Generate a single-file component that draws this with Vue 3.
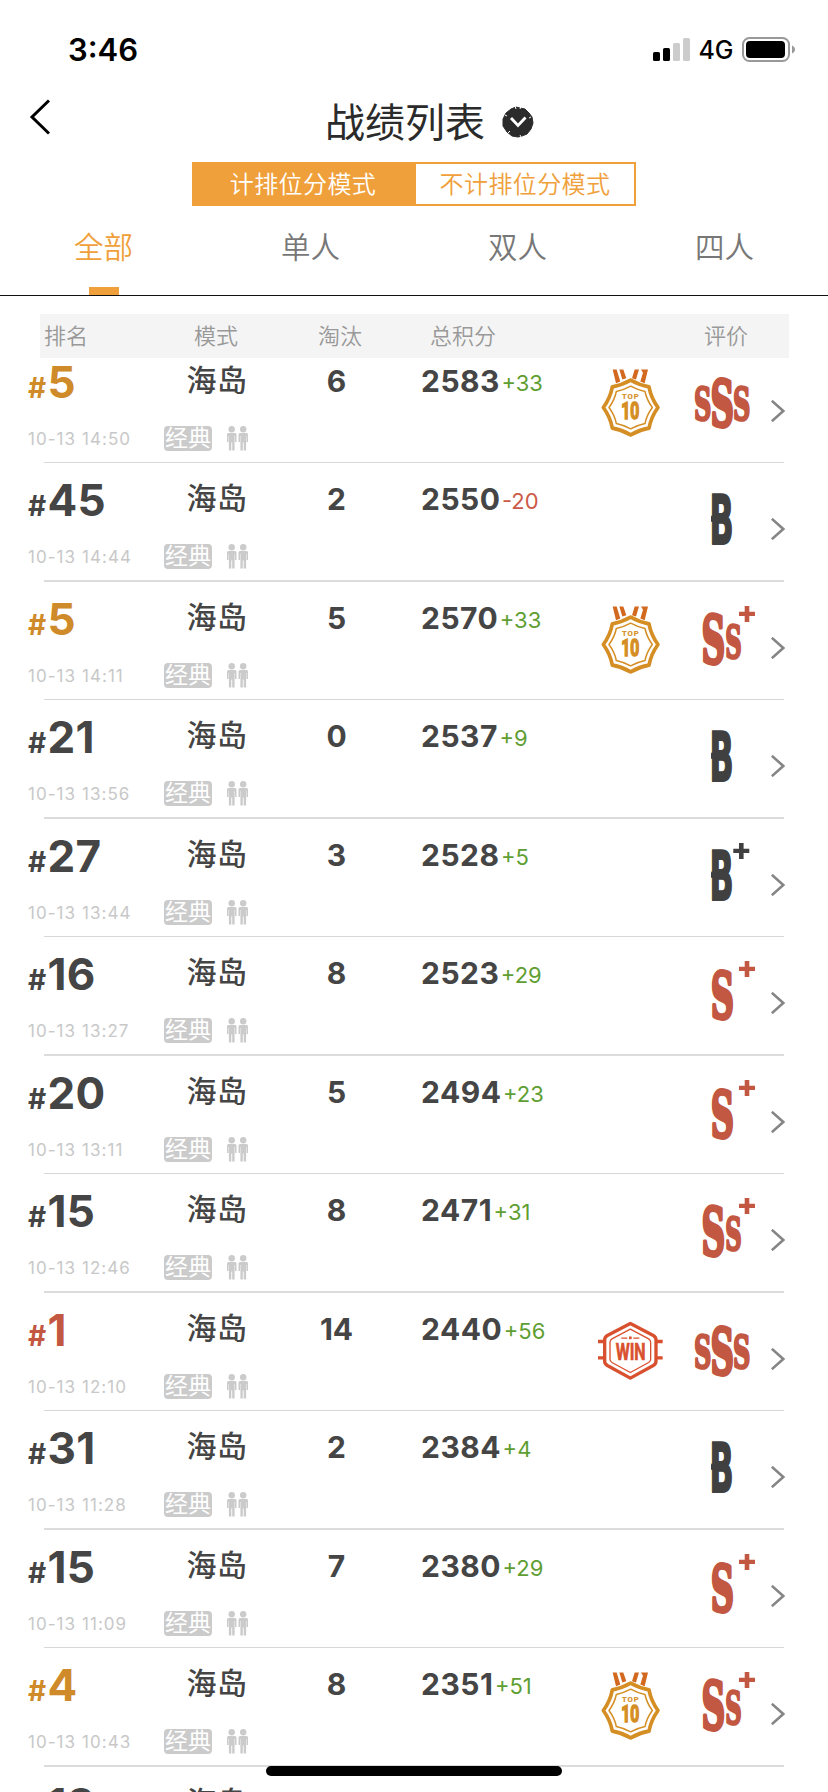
<script setup>
const rows = [
  { rank: 5, time: '10-13 14:50', kills: 6, score: 2583, delta: '+33', medal: 'top', grade: 'SSS' },
  { rank: 45, time: '10-13 14:44', kills: 2, score: 2550, delta: '-20', grade: 'B' },
  { rank: 5, time: '10-13 14:11', kills: 5, score: 2570, delta: '+33', medal: 'top', grade: 'SS+' },
  { rank: 21, time: '10-13 13:56', kills: 0, score: 2537, delta: '+9', grade: 'B' },
  { rank: 27, time: '10-13 13:44', kills: 3, score: 2528, delta: '+5', grade: 'B+' },
  { rank: 16, time: '10-13 13:27', kills: 8, score: 2523, delta: '+29', grade: 'S+' },
  { rank: 20, time: '10-13 13:11', kills: 5, score: 2494, delta: '+23', grade: 'S+' },
  { rank: 15, time: '10-13 12:46', kills: 8, score: 2471, delta: '+31', grade: 'SS+' },
  { rank: 1, time: '10-13 12:10', kills: 14, score: 2440, delta: '+56', medal: 'win', grade: 'SSS' },
  { rank: 31, time: '10-13 11:28', kills: 2, score: 2384, delta: '+4', grade: 'B' },
  { rank: 15, time: '10-13 11:09', kills: 7, score: 2380, delta: '+29', grade: 'S+' },
  { rank: 4, time: '10-13 10:43', kills: 8, score: 2351, delta: '+51', medal: 'top', grade: 'SS+' },
  { rank: 13, time: '', kills: '', score: '', delta: '', grade: '' },
]
const tabs = ['全部', '单人', '双人', '四人']

// Letter boxes [char, left, top, width, height] inside the grade cell
const letters = {
  SSS: [['S', 23.6, 40, 15.4, 37], ['S', 62.6, 40, 15.4, 37], ['S', 40.2, 31.3, 20.8, 52.4]],
  'SS+': [['S', 31.4, 31.3, 21, 53], ['S', 54.8, 41, 14.6, 37]],
  'S+': [['S', 40.5, 31.3, 20.6, 52.4]],
  B: [['B', 41, 31, 20.4, 51.5]],
  'B+': [['B', 41, 31, 20.4, 51.5]],
}
const ink = {
  S: { x: 5.5, w: 58, h: 75.7, o: 1.4, s: 3 },
  B: { x: 9.2, w: 61.5, h: 72.9, o: 0, s: 1.5 },
}
// Ink metrics and stroke half-width (s) are in the 100-unit glyph space
function place([ch, x, y, w, h]) {
  const m = ink[ch]
  const sx = w / (m.w + 2 * m.s)
  const sy = h / (m.h + 2 * m.s)
  return `translate(${x - (m.x - m.s) * sx} ${y + h - (m.o + m.s) * sy}) scale(${sx} ${sy})`
}
const plus = { 'SS+': [76, 31.5], 'S+': [76, 31.5], 'B+': [70.3, 31.5] }
const rankTone = (r) => (r === 1 ? 'win' : r <= 10 ? 'top' : '')
</script>

<template>
  <div class="page">
    <header class="status">
      <span class="clock">3:46</span>
      <span class="right">
        <svg class="bars" width="38" height="24" viewBox="0 0 38 24">
          <rect x="0" y="14" width="7" height="9" rx="1.6" />
          <rect x="10" y="10" width="7" height="13" rx="1.6" />
          <rect x="20" y="5" width="7" height="18" rx="1.6" fill="#ccc" />
          <rect x="30" y="0" width="7" height="23" rx="1.6" fill="#ccc" />
        </svg>
        <span class="net">4G</span>
        <svg width="54" height="26" viewBox="0 0 54 26">
          <rect x="1" y="1" width="46" height="23" rx="6.5" fill="none" stroke="#999" stroke-width="2" />
          <rect x="4" y="4" width="39" height="17" rx="4" />
          <path d="M50 8.500c4 1.500 4 6.500 0 8z" fill="#999" />
        </svg>
      </span>
    </header>

    <div class="titlebar">
      <svg class="back" width="22" height="36" viewBox="0 0 22 36">
        <path d="M21 1.500 4 18l17 16.500" fill="none" stroke="#000" stroke-width="3" />
      </svg>
      <h1>战绩列表</h1>
      <svg class="drop" width="32" height="32" viewBox="0 0 32 32">
        <path d="M9 3l5-2 4 1 5 1 4 4 3 4 1 6-2 6-4 5-5 2-4 1-6-1-5-4-4-6 0-7 3-6z" fill="#2b2b2b" stroke="#2b2b2b" stroke-width="1" stroke-linejoin="round" />
        <path d="M9 12l7 7.500 7.500-8" fill="none" stroke="#fff" stroke-width="2.800" />
        <path d="M13 0l1 3M19 0l-1 3M3 9l2 1M29 11l-2 1M6 27l2-2M19 31l-1-2" stroke="#fff" stroke-width="1" />
      </svg>
    </div>

    <div class="toggle">
      <span class="on">计排位分模式</span>
      <span class="off">不计排位分模式</span>
    </div>

    <nav class="tabs">
      <span v-for="(t, i) in tabs" :key="t" :class="{ active: i === 0 }">{{ t }}</span>
    </nav>

    <div class="head">
      <span>排名</span><span>模式</span><span>淘汰</span><span>总积分</span><span>评价</span>
    </div>

    <main class="viewport">
      <div class="list">
        <article v-for="(r, i) in rows" :key="i" class="row">
          <div class="rank">
            <div class="place" :class="rankTone(r.rank)"><small>#</small>{{ r.rank }}</div>
            <div class="time">{{ r.time }}</div>
          </div>
          <div class="mode">
            <div class="map">海岛</div>
            <div v-if="r.time" class="tags">
              <span class="tag">经典</span>
              <svg width="21" height="25" viewBox="0 0 21 25" fill="#cbcbcb">
                <g v-for="k in [0, 11.5]" :key="k" :transform="`translate(${k} 0)`">
                  <circle cx="4.700" cy="3.300" r="3.200" />
                  <path d="M1.500 7h6.500q1.500 0 1.500 1.500V16H8V10H7.600V24.500H5.200V16.500H4.300V24.500H1.900V10H1.500V16H0V8.500Q0 7 1.500 7z" />
                </g>
              </svg>
            </div>
          </div>
          <div class="kills">{{ r.kills }}</div>
          <div class="score">
            <b>{{ r.score }}</b><i :class="{ down: r.delta[0] === '-' }">{{ r.delta }}</i>
          </div>
          <svg class="medal" width="81" height="117" viewBox="0 0 81 117">
            <g v-if="r.medal === 'top'" transform="translate(0 15.5) scale(.3333)">
              <path fill="#d2691f" d="M68 27h12l11 36-13 5zM88 27h12l9 26-12 4zM134 27h13l-9 30-12-4zM153 27h21l-2 8-8 33-13-5 8-26z" />
              <g fill="none" stroke="#d58e24" stroke-linejoin="round">
                <path d="M122 59Q148 74 177 79Q183 112 204 141Q183 170 177 203Q148 208 122 223Q96 208 67 203Q61 170 40 141Q61 112 67 79Q96 74 122 59Z" stroke-width="11" />
                <path d="M122 77Q142 88 165 93Q170 118 187 141Q170 164 165 189Q142 194 122 205Q102 194 79 189Q74 164 57 141Q74 118 79 93Q102 88 122 77Z" stroke-width="4.500" />
              </g>
              <g fill="#d58e24" stroke="#d58e24" class="stamp">
                <text x="96" y="117" font-size="23" textLength="50" lengthAdjust="spacing" stroke-width=".5">TOP</text>
                <text x="94" y="177" font-size="73" textLength="54" lengthAdjust="spacingAndGlyphs" stroke-width="5">10</text>
              </g>
            </g>
            <g v-else-if="r.medal === 'win'" transform="translate(0 7.5) scale(.3333)">
              <g fill="none" stroke="#d9502f" stroke-linejoin="round">
                <path d="M121 69L190 105Q198 110 198 118V182Q198 190 190 195L121 233L52 195Q44 190 44 182V118Q44 110 52 105Z" stroke-width="10" />
                <path d="M121 86L176 115Q182 118 182 126V176Q182 182 176 186L121 216L66 186Q60 182 60 176V126Q60 118 66 115Z" stroke-width="4" />
                <path d="M24 123h20M24 172h20M198 123h20M198 172h20" stroke-width="10" />
                <path d="M94 113h18M130 113h18" stroke-width="4" />
                <path d="M117 112h8" stroke-width="8" />
              </g>
              <g class="stamp">
                <text x="77" y="179" font-size="71" textLength="90" lengthAdjust="spacingAndGlyphs" fill="#d9502f" stroke="#d9502f" stroke-width="2">WIN</text>
              </g>
            </g>
          </svg>
          <svg class="grade" :class="r.grade[0]" width="100" height="117" viewBox="0 0 100 117">
            <text v-for="(l, k) in letters[r.grade]" :key="k" :transform="place(l)">{{ l[0] }}</text>
            <rect v-if="r.grade[0] === 'B'" x="40" y="52.500" width="3" height="6.500" rx="1" />
            <path v-if="plus[r.grade]" :transform="`translate(${plus[r.grade][0] - 8} ${plus[r.grade][1] - 7.5})`" d="M5.700 0h4.600v5.700H16v4.400h-5.700V16H5.700v-5.900H0V5.700h5.700z" />
          </svg>
          <svg v-if="r.time" class="arrow" width="14" height="22" viewBox="0 0 14 22">
            <path d="M.8.8 12.300 11 .8 21.200" fill="none" stroke="#858585" stroke-width="2.600" />
          </svg>
        </article>
      </div>
    </main>
    <div class="home"></div>
  </div>
</template>

<style>
body { background: #fff; }
</style>

<style scoped>
.page {
  position: relative;
  width: 828px;
  height: 1792px;
  overflow: hidden;
  background: #fff;
  font-family: Inter, "Noto Sans CJK SC", sans-serif;
  color: #454545;
  display: flex;
  flex-direction: column;
}
.status {
  height: 100px;
  flex: none;
  display: flex;
  justify-content: space-between;
  padding: 0 32.5px 0 68px;
  box-sizing: border-box;
  color: #000;
}
.clock { font-size: 31px; font-weight: 600; line-height: 38px; margin-top: 31px; }
.right { display: flex; align-items: flex-start; padding-top: 37px; }
.bars { margin-top: 1px; }
.net { font-size: 25px; font-weight: 500; line-height: 30px; margin: -2px 8px 0 7px; letter-spacing: 0; }
.titlebar {
  height: 62px;
  flex: none;
  display: flex;
  align-items: flex-start;
  padding-left: 28px;
}
.back { margin-top: -1px; }
h1 {
  margin: 1px 0 0 275px;
  font-size: 40px;
  line-height: 44px;
  font-weight: 400;
  color: #2b2b2b;
  width: 160px;
  white-space: nowrap;
}
.drop { margin: 6px 0 0 17px; }
.toggle {
  flex: none;
  width: 444px;
  height: 44px;
  box-sizing: border-box;
  margin-left: 192px;
  border: 2px solid #f0a03a;
  display: flex;
  font-size: 24px;
  letter-spacing: .4px;
  line-height: 42px;
  text-align: center;
  font-weight: 350;
}
.on { width: 222px; padding-right: 4px; box-sizing: border-box; background: #f0a03a; color: #fff; }
.off { flex: 1; color: #f0a03a; }
.tabs {
  flex: none;
  height: 90px;
  box-sizing: border-box;
  border-bottom: 1px solid #111;
  display: flex;
  font-size: 29.5px;
  font-weight: 350;
  color: #777;
}
.tabs span {
  flex: 1;
  display: flex;
  flex-direction: column;
  align-items: center;
  line-height: 40px;
  padding-top: 21px;
}
.tabs .active { color: #f0a03a; }
.tabs .active::after { content: ""; width: 30px; height: 8px; background: #f0a03a; margin-top: 20px; }
.head {
  flex: none;
  height: 44px;
  margin: 18px 39px 0 40px;
  background: #f4f4f4;
  color: #999;
  font-size: 22px;
  font-weight: 350;
  line-height: 45px;
  display: grid;
  grid-template-columns: 150px 124px 112px 274px auto;
  padding-left: 4px;
}
.viewport { flex: 1; overflow: hidden; }
.list { margin-top: -13px; }
.row {
  position: relative;
  height: 118px;
  box-sizing: border-box;
  padding-left: 28px;
  width: 785px;
  display: flex;
}
.row:nth-child(even) { height: 119px; }
.row::after {
  content: "";
  position: absolute;
  left: 44px;
  right: 1px;
  bottom: 0;
  height: 1px;
  background: #d8d8d8;
}
.row:nth-child(even)::after { height: 2px; background: #dcdcdc; }
.rank { width: 136px; flex: none; }
.place {
  font-size: 44px;
  font-weight: 700;
  line-height: 52px;
  margin-top: 11px;
  letter-spacing: .2px;
}
.place small { font-size: 28px; letter-spacing: 1.4px; }
.place.top { color: #cf8a29; }
.place.win { color: #c25742; }
.time { font-size: 17px; letter-spacing: 1.05px; line-height: 20px; margin-top: 15px; color: #c8c8c8; font-weight: 400; }
.mode { width: 106px; flex: none; }
.map { font-size: 30px; letter-spacing: .6px; font-weight: 500; line-height: 40px; margin-top: 15px; text-align: center; }
.tags { display: flex; margin-top: 26px; align-items: flex-start; }
.tag {
  width: 48px;
  height: 25px;
  margin-right: 15px;
  border-radius: 4px;
  background: #cbcbcb;
  color: #fff;
  font-size: 23px;
  line-height: 24px;
  text-align: center;
}
.kills { width: 132px; flex: none; text-align: center; font-size: 30px; line-height: 36px; font-weight: 700; padding: 18px 0 0 1px; box-sizing: border-box; }
.score { width: 188px; flex: none; box-sizing: border-box; padding: 18px 0 0 19px; line-height: 36px; white-space: nowrap; }
.score b { font-size: 30px; font-weight: 700; letter-spacing: .5px; }
.score i { position: relative; top: -1px; font-style: normal; font-size: 22px; color: #5f9e32; margin-left: 1.5px; }
.score i.down { color: #cc5a48; }
.medal, .grade, .arrow { flex: none; display: block; }
.stamp text { font-family: Roboto, sans-serif; font-weight: 700; }
.grade text { font-size: 100px; font-weight: 700; stroke-width: 6px; stroke-linejoin: round; }
.grade.S { fill: #c25742; }
.grade.S text { font-family: "DejaVu Serif", serif; stroke: #c25742; }
.grade.B { fill: #404040; }
.grade.B text { font-family: "DejaVu Sans", sans-serif; stroke: #404040; stroke-width: 3px; }
.arrow { margin-top: 55px; }
.home {
  position: absolute;
  left: 266px;
  top: 1766px;
  width: 296px;
  height: 10px;
  border-radius: 5px;
  background: #000;
}
</style>
